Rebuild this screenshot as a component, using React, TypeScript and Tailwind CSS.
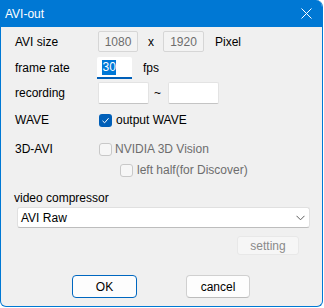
const font = { fontFamily: '"Liberation Sans", Arial, sans-serif' };

function Check({ checked, disabled }: { checked?: boolean; disabled?: boolean }) {
  if (checked) {
    return (
      <span className="w-[13px] h-[13px] rounded-[3px] bg-[#005fb8] flex items-center justify-center shrink-0">
        <svg width="9" height="9" viewBox="0 0 9 9">
          <path d="M1.5 4.8 L3.6 6.8 L7.6 2.2" fill="none" stroke="#fff" strokeWidth="1" />
        </svg>
      </span>
    );
  }
  return (
    <span
      className={`w-[13px] h-[13px] rounded-[3px] border shrink-0 ${
        disabled ? 'border-[#c8c8c8] bg-[#f6f6f6]' : 'border-[#8a8a8a] bg-white'
      }`}
    />
  );
}

export default function App() {
  return (
    <div className="w-[324px] h-[308px] bg-white" style={font}>
      <div className="w-[323px] h-[307px] flex flex-col bg-[#f0f0f0] border-x border-b border-[#0078d4] rounded-tr-[7px] rounded-b-[6px] overflow-hidden text-[12px] text-black">
        {/* title bar */}
        <div className="h-[27px] bg-[#0078d4] flex items-center justify-between pl-[4px] pr-[10px] shrink-0">
          <span className="text-white text-[12px] mt-[1px]">AVI-out</span>
          <svg width="11" height="11" viewBox="0 0 11 11">
            <path d="M0.5 0.5 L10.5 10.5 M10.5 0.5 L0.5 10.5" stroke="#fff" strokeWidth="1" />
          </svg>
        </div>

        <div className="flex flex-col pl-[14px]">
          {/* AVI size */}
          <div className="flex items-center h-[21px] mt-[4px]">
            <span className="w-[83px]">AVI size</span>
            <div className="w-[40px] h-[21px] border border-[#d6d6d6] bg-[#f3f3f3] rounded-[2px] flex items-center justify-center text-[#6d6d6d]">
              1080
            </div>
            <span className="ml-[10px]">x</span>
            <div className="ml-[9px] w-[41px] h-[21px] border border-[#d6d6d6] bg-[#f3f3f3] rounded-[2px] flex items-center justify-center text-[#6d6d6d]">
              1920
            </div>
            <span className="ml-[11px]">Pixel</span>
          </div>

          {/* frame rate */}
          <div className="flex items-center h-[22px] mt-[5px]">
            <span className="w-[82px]">frame rate</span>
            <div className="w-[35px] h-[22px] bg-white border-b-2 border-[#005fb8] rounded-t-[2px] flex items-center pl-[5px]">
              <span className="bg-[#0078d7] text-white leading-[15px] px-[0.5px]">30</span>
            </div>
            <span className="ml-[11px]">fps</span>
          </div>

          {/* recording */}
          <div className="flex items-center h-[22px] mt-[3px]">
            <span className="w-[83px]">recording</span>
            <div className="w-[51px] h-[22px] bg-white border border-[#e3e3e3] border-b-[#c4c4c4] rounded-[2px]" />
            <span className="ml-[5px] w-[14px]">~</span>
            <div className="w-[51px] h-[22px] bg-white border border-[#e3e3e3] border-b-[#c4c4c4] rounded-[2px]" />
          </div>

          {/* WAVE */}
          <div className="flex items-center h-[22px] mt-[5px]">
            <span className="w-[84px]">WAVE</span>
            <Check checked />
            <span className="ml-[4px]">output WAVE</span>
          </div>

          {/* 3D-AVI */}
          <div className="flex items-center h-[22px] mt-[7px]">
            <span className="w-[84px]">3D-AVI</span>
            <Check disabled />
            <span className="ml-[3px] text-[#6d6d6d]">NVIDIA 3D Vision</span>
          </div>
          <div className="flex items-center h-[20px]">
            <span className="w-[105px]" />
            <Check disabled />
            <span className="ml-[4px] text-[#6d6d6d]">left half(for Discover)</span>
          </div>

          {/* video compressor */}
          <div className="flex items-center h-[16px] mt-[10px] -ml-[1px]">video compressor</div>
          <div className="ml-[2px] mt-[1px] w-[293px] h-[21px] bg-white border border-[#e0e0e0] border-b-[#bdbdbd] rounded-[3px] flex items-center justify-between pl-[3px] pr-[4px]">
            <span>AVI Raw</span>
            <svg width="9" height="6" viewBox="0 0 9 6">
              <path d="M0.5 0.8 L4.5 4.8 L8.5 0.8" fill="none" stroke="#5c5c5c" strokeWidth="1" />
            </svg>
          </div>

          <div className="flex justify-end pr-[23px] mt-[8px]">
            <div className="w-[62px] h-[19px] bg-[#f6f6f6] border border-[#e8e8e8] rounded-[3px] flex items-center justify-center text-[#8a8a8a]">
              setting
            </div>
          </div>

          {/* buttons */}
          <div className="flex mt-[20px] pl-[57px]">
            <div className="w-[65px] h-[23px] bg-[#fdfdfd] border border-[#0067c0] rounded-[4px] flex items-center justify-center">
              OK
            </div>
            <div className="ml-[49px] w-[64px] h-[23px] bg-[#fdfdfd] border border-[#d0d0d0] border-b-[#bcbcbc] rounded-[4px] flex items-center justify-center">
              cancel
            </div>
          </div>
        </div>
      </div>
    </div>
  );
}
